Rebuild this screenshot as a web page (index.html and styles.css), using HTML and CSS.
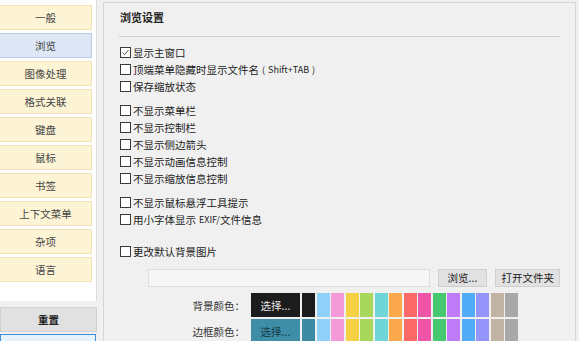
FILE: index.html
```html
<!DOCTYPE html>
<html lang="zh-CN">
<head>
    <meta charset="UTF-8">
    <title>设置</title>
    <link rel="stylesheet" href="styles.css">
</head>
<body>
    <div class="window">
        <aside class="side">
            <nav class="nav">
                <button class="nav-btn">一般</button>
                <button class="nav-btn active">浏览</button>
                <button class="nav-btn">图像处理</button>
                <button class="nav-btn">格式关联</button>
                <button class="nav-btn">键盘</button>
                <button class="nav-btn">鼠标</button>
                <button class="nav-btn">书签</button>
                <button class="nav-btn">上下文菜单</button>
                <button class="nav-btn">杂项</button>
                <button class="nav-btn">语言</button>
            </nav>
            <button class="btn reset">重置</button>
            <!-- focused button, only its top edge is in view -->
            <button class="btn ok" aria-label="确定"></button>
        </aside>

        <main class="panel">
            <h2 class="title">浏览设置</h2>
            <div class="sep"></div>

            <div class="group">
                <label class="check"><span class="box checked"><svg viewBox="0 0 11 11"><polyline points="2,5.5 4.5,8 9,2.5" /></svg></span>显示主窗口</label>
                <label class="check"><span class="box"></span>顶端菜单隐藏时显示文件名<span class="small">( Shift+TAB )</span></label>
                <label class="check"><span class="box"></span>保存缩放状态</label>
            </div>

            <div class="group">
                <label class="check"><span class="box"></span>不显示菜单栏</label>
                <label class="check"><span class="box"></span>不显示控制栏</label>
                <label class="check"><span class="box"></span>不显示侧边箭头</label>
                <label class="check"><span class="box"></span>不显示动画信息控制</label>
                <label class="check"><span class="box"></span>不显示缩放信息控制</label>
            </div>

            <div class="group">
                <label class="check"><span class="box"></span>不显示鼠标悬浮工具提示</label>
                <label class="check"><span class="box"></span>用小字体显示 <span class="small">EXIF/</span>文件信息</label>
            </div>

            <div class="group wide">
                <label class="check"><span class="box"></span>更改默认背景图片</label>
            </div>

            <div class="file-row">
                <div class="path"></div>
                <button class="btn browse">浏览...</button>
                <button class="btn open">打开文件夹</button>
            </div>

            <div class="color-row">
                <span class="color-label">背景颜色：</span>
                <button class="pick pick-dark">选择...</button>
                <div class="swatches">
                    <span class="sw" style="background:#1c1c1c"></span>
                    <span class="sw" style="background:#8fd1fb"></span>
                    <span class="sw" style="background:#f59ad8"></span>
                    <span class="sw" style="background:#f6d143"></span>
                    <span class="sw" style="background:#a9d75b"></span>
                    <span class="sw" style="background:#6fd5d6"></span>
                    <span class="sw" style="background:#fca84c"></span>
                    <span class="sw" style="background:#fb6868"></span>
                    <span class="sw" style="background:#ee55a7"></span>
                    <span class="sw" style="background:#45c86f"></span>
                    <span class="sw" style="background:#bf7cf8"></span>
                    <span class="sw" style="background:#52abf7"></span>
                    <span class="sw" style="background:#9594fb"></span>
                    <span class="sw" style="background:#c2b4a5"></span>
                    <span class="sw" style="background:#a8a8a8"></span>
                </div>
            </div>

            <div class="color-row">
                <span class="color-label">边框颜色：</span>
                <button class="pick pick-teal">选择...</button>
                <div class="swatches">
                    <span class="sw" style="background:#3a8ba2"></span>
                    <span class="sw" style="background:#8fd1fb"></span>
                    <span class="sw" style="background:#f59ad8"></span>
                    <span class="sw" style="background:#f6d143"></span>
                    <span class="sw" style="background:#a9d75b"></span>
                    <span class="sw" style="background:#6fd5d6"></span>
                    <span class="sw" style="background:#fca84c"></span>
                    <span class="sw" style="background:#fb6868"></span>
                    <span class="sw" style="background:#ee55a7"></span>
                    <span class="sw" style="background:#45c86f"></span>
                    <span class="sw" style="background:#bf7cf8"></span>
                    <span class="sw" style="background:#52abf7"></span>
                    <span class="sw" style="background:#9594fb"></span>
                    <span class="sw" style="background:#c2b4a5"></span>
                    <span class="sw" style="background:#a8a8a8"></span>
                </div>
            </div>
        </main>
    </div>
</body>
</html>
```

FILE: styles.css
```css
body {
    margin: 0;
    background: #f0f0f0;
    font-family: "Noto Sans CJK SC", "Noto Sans", sans-serif;
    font-size: 10.5px;
    color: #222;
    overflow: hidden;
}

.window {
    display: flex;
    height: 341px;
    overflow: hidden;
}

/* left column */
.side {
    width: 97px;
    flex: none;
    display: flex;
    flex-direction: column;
}

.side > * {
    flex: none;
}

.nav {
    height: 301px;
    box-sizing: border-box;
    background: #fff;
    border-right: 1px solid #dcdcdc;
    padding-top: 5px;
    display: flex;
    flex-direction: column;
    gap: 3px;
}

.nav-btn {
    width: 93px;
    height: 25px;
    margin-left: -1px;
    padding: 0;
    border: 1px solid #f1e3b4;
    background: #fdf4d6;
    font-family: inherit;
    font-size: 10.5px;
    color: #444;
}

.nav-btn.active {
    background: #dde7f5;
    border-color: #b9cbe6;
}

.btn {
    padding: 0;
    border: 1px solid #b4b4b4;
    background: #e1e1e1;
    font-family: inherit;
    font-size: 10.5px;
    color: #222;
}

.reset {
    width: 97px;
    height: 25px;
    margin-top: 6px;
    border-color: #d0d0d0;
    color: #222;
    font-weight: bold;
}

.ok {
    width: 96px;
    height: 25px;
    margin-top: 2px;
    border-color: #3c8fd9;
    background: #e5f1fb;
}

/* right panel */
.panel {
    width: 473px;
    flex: none;
    margin-left: 6px;
    margin-top: 2px;
    box-sizing: border-box;
    border: 1px solid #d5d5d5;
    border-bottom: none;
    padding: 0 15px;
}

.title {
    margin: 7px 0 0 1px;
    font-size: 11px;
    line-height: 14px;
    font-weight: bold;
    color: #222;
}

.sep {
    height: 1px;
    background: #d0d0d0;
    margin-top: 12px;
}

.group {
    margin-top: 7px;
}

.group.wide {
    margin-top: 15px;
}

.check {
    display: flex;
    align-items: center;
    height: 17px;
    white-space: nowrap;
}

.box {
    width: 11px;
    height: 11px;
    box-sizing: border-box;
    margin: 0 2px 0 1px;
    border: 1px solid #3a3a3a;
    background: #fff;
    flex: none;
}

.box svg {
    display: block;
    width: 9px;
    height: 9px;
}

.box polyline {
    fill: none;
    stroke: #555;
    stroke-width: 1.2;
}

.small {
    font-size: 9px;
    margin-left: 3px;
    word-spacing: 1px;
}

/* file chooser */
.file-row {
    display: flex;
    align-items: center;
    margin-top: 8px;
    height: 19px;
}

.path {
    width: 283px;
    height: 18px;
    margin-left: 29px;
    box-sizing: border-box;
    border: 1px solid #dedede;
    background: #f6f6f6;
}

.browse {
    width: 50px;
    height: 18px;
    margin-left: 8px;
    border-color: #cfcfcf;
}

.open {
    width: 65px;
    height: 18px;
    margin-left: 8px;
    border-color: #cfcfcf;
}

/* colour rows */
.color-row {
    display: flex;
    align-items: center;
    height: 24px;
    margin-top: 6px;
}

.color-row + .color-row {
    margin-top: 2px;
}

.color-label {
    width: 126px;
    margin-right: 6px;
    text-align: right;
    font-size: 10.5px;
    color: #333;
}

.pick {
    width: 49px;
    height: 24px;
    flex: none;
    padding: 0;
    border: none;
    font-family: inherit;
    font-size: 10.5px;
}

.pick-dark {
    background: #1c1c1c;
    color: #e6e6e6;
}

.pick-teal {
    background: #3d8ea6;
    color: #173a48;
}

.swatches {
    display: flex;
    gap: 1.5px;
    margin-left: 2px;
    height: 24px;
}

.sw {
    width: 13px;
    height: 24px;
}
```
